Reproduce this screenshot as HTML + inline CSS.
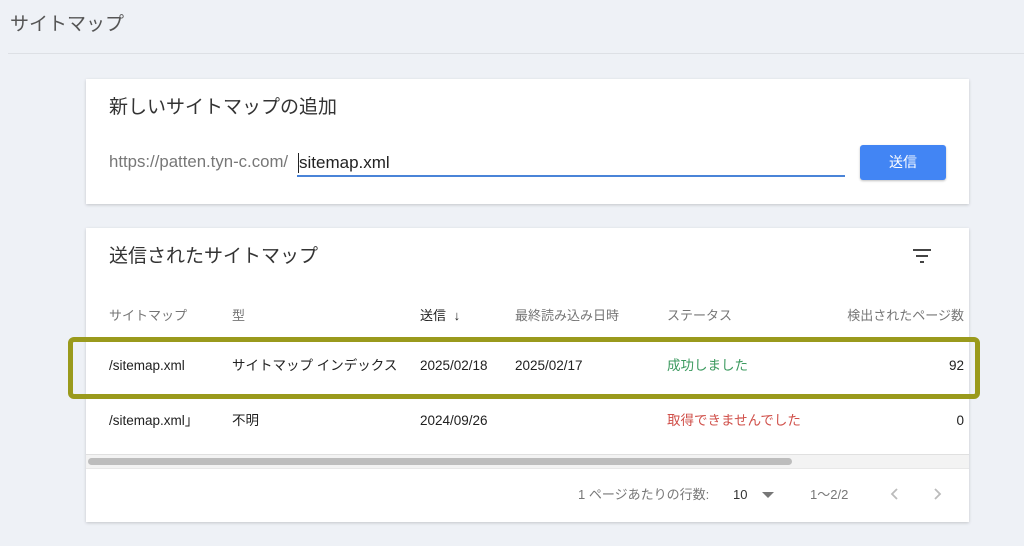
<!DOCTYPE html>
<html><head><meta charset="utf-8"><style>
*{margin:0;padding:0;box-sizing:border-box}
body{width:1024px;height:546px;background:#eef1f6;font-family:"Liberation Sans","Noto Sans CJK JP",sans-serif;position:relative;overflow:hidden;color:#212121}
.a{position:absolute;white-space:nowrap;line-height:20px}
.card{position:absolute;background:#fff;box-shadow:0 1px 3px rgba(0,0,0,.18)}
.h{font-size:13px;color:#757575}
.c{font-size:13.5px;color:#212121}
</style></head><body>
<div class="a" style="left:10px;top:15px;font-size:19px;color:#555">サイトマップ</div>
<div class="a" style="left:8px;top:53px;width:1016px;height:1px;background:#dde0e5"></div>

<div class="card" style="left:86px;top:79px;width:883px;height:125px"></div>
<div class="a" style="left:109px;top:98px;font-size:19px;color:#333">新しいサイトマップの追加</div>
<div class="a" style="left:109px;top:152px;font-size:16.8px;color:#777">https://patten.tyn-c.com/</div>
<div class="a" style="left:299px;top:153px;font-size:17px;color:#222">sitemap.xml</div>
<div class="a" style="left:298px;top:153px;width:1px;height:20px;background:#222"></div>
<div class="a" style="left:297px;top:175px;width:548px;height:2px;background:#4a84d8"></div>
<div class="a" style="left:860px;top:145px;width:86px;height:35px;background:#4285f4;border-radius:3px;color:#fff;font-size:14px;text-align:center;line-height:35px;box-shadow:0 1px 2px rgba(0,0,0,.25)">送信</div>

<div class="card" style="left:86px;top:228px;width:883px;height:294px"></div>
<div class="a" style="left:109px;top:247px;font-size:19px;color:#333">送信されたサイトマップ</div>
<svg class="a" style="left:912px;top:248px" width="20" height="16"><path d="M1 2h18M4 8h12M8 14h4" stroke="#444" stroke-width="2"/></svg>

<div class="a h" style="left:109px;top:306px">サイトマップ</div>
<div class="a h" style="left:232px;top:306px">型</div>
<div class="a" style="left:420px;top:306px;font-size:13px;color:#222">送信 <span style="margin-left:4px">↓</span></div>
<div class="a h" style="left:515px;top:306px">最終読み込み日時</div>
<div class="a h" style="left:667px;top:306px">ステータス</div>
<div class="a h" style="right:60px;top:306px">検出されたページ数</div>

<div class="a" style="left:86px;top:339px;width:883px;height:1px;background:#e6e6e6"></div>
<div class="a c" style="left:109px;top:356px">/sitemap.xml</div>
<div class="a c" style="left:232px;top:356px">サイトマップ インデックス</div>
<div class="a c" style="left:420px;top:356px">2025/02/18</div>
<div class="a c" style="left:515px;top:356px">2025/02/17</div>
<div class="a c" style="left:667px;top:356px;color:#3c9a5f">成功しました</div>
<div class="a c" style="right:60px;top:356px">92</div>
<div class="a" style="left:86px;top:394px;width:883px;height:1px;background:#e6e6e6"></div>
<div class="a c" style="left:109px;top:411px">/sitemap.xml」</div>
<div class="a c" style="left:232px;top:411px">不明</div>
<div class="a c" style="left:420px;top:411px">2024/09/26</div>
<div class="a c" style="left:667px;top:411px;color:#d0504a">取得できませんでした</div>
<div class="a c" style="right:60px;top:411px">0</div>

<div class="a" style="left:86px;top:454px;width:883px;height:15px;background:#f3f3f3;border-top:1px solid #e0e0e0;border-bottom:1px solid #e8e8e8"></div>
<div class="a" style="left:88px;top:458px;width:704px;height:7px;background:#bdbdbd;border-radius:4px"></div>

<div class="a" style="left:578px;top:485px;font-size:13px;color:#777">1 ページあたりの行数:</div>
<div class="a" style="left:733px;top:485px;font-size:13px;color:#333">10</div>
<svg class="a" style="left:762px;top:492px" width="12" height="7"><path d="M0 0h12L6 6z" fill="#777"/></svg>
<div class="a" style="left:810px;top:485px;font-size:13px;color:#777">1〜2/2</div>
<svg class="a" style="left:890px;top:487px" width="10" height="14"><path d="M7 2L2 7l5 5" stroke="#bbb" stroke-width="1.8" fill="none"/></svg>
<svg class="a" style="left:932px;top:487px" width="10" height="14"><path d="M3 2l5 5-5 5" stroke="#bbb" stroke-width="1.8" fill="none"/></svg>

<div class="a" style="left:68px;top:337px;width:912px;height:62px;border:5px solid #9a9a1c;border-radius:6px"></div>
</body></html>
